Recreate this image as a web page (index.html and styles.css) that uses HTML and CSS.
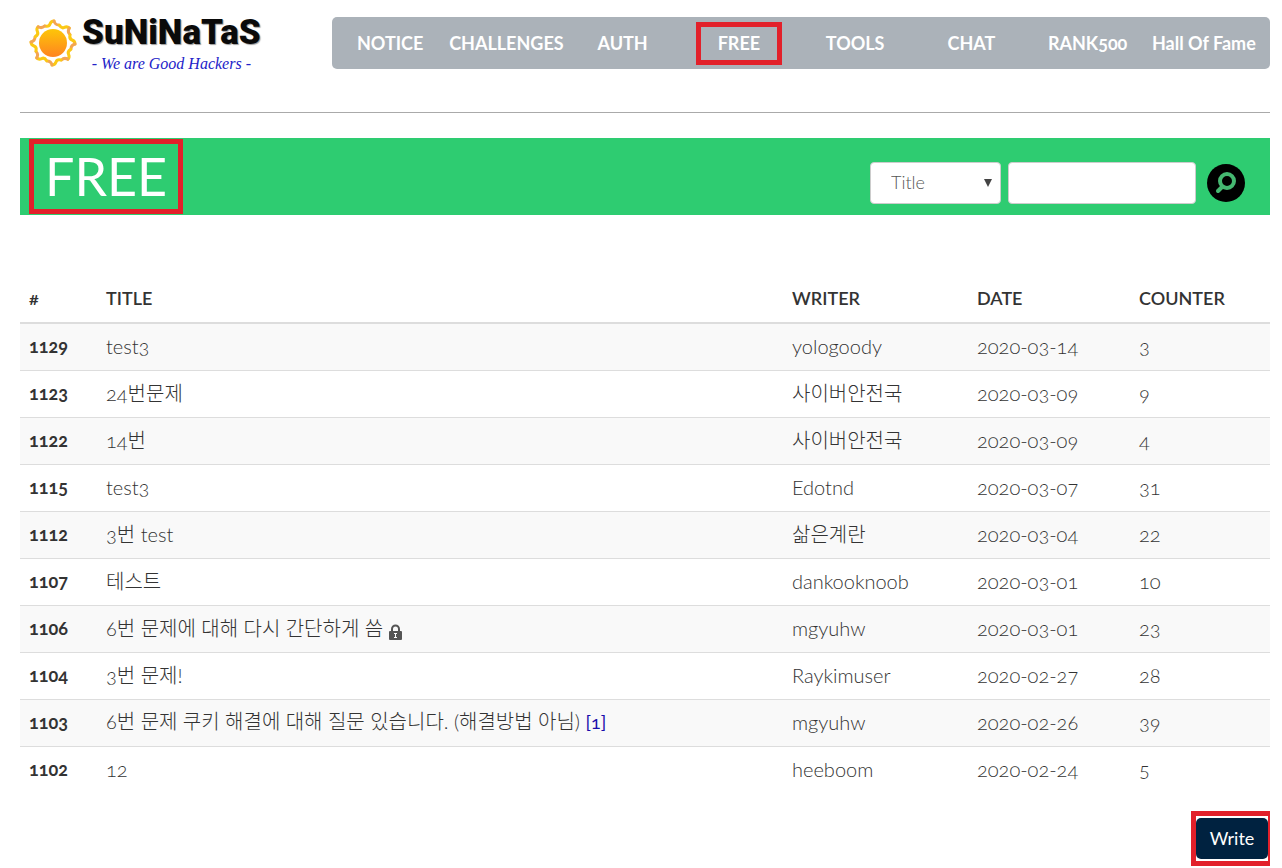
FILE: index.html
```
<!DOCTYPE html>
<html lang="en">
<head>
    <meta charset="UTF-8">
    <meta name="viewport" content="width=device-width, initial-scale=1.0">
    <title>SuNiNaTaS - FREE</title>
    <link rel="stylesheet" href="styles.css">
</head>
<body>
    <header>
        <a class="logo" href="#">
            <svg class="sun" viewBox="0 0 50 50" aria-hidden="true">
                <defs>
                    <linearGradient id="core" x1="0" y1="0" x2="0" y2="1">
                        <stop offset="0" stop-color="#fdc608"/>
                        <stop offset="1" stop-color="#ff8420"/>
                    </linearGradient>
                    <g id="ray" fill="none" stroke-width="3" stroke-linecap="round">
                        <path d="M17 8 Q21 9 22 6 Q23 3 26 3" stroke="#fbc914"/>
                        <path d="M26 3 Q27 7 31 7" stroke="#f3a552"/>
                    </g>
                </defs>
                <use href="#ray"/>
                <use href="#ray" transform="rotate(45 25 25)"/>
                <use href="#ray" transform="rotate(90 25 25)"/>
                <use href="#ray" transform="rotate(135 25 25)"/>
                <use href="#ray" transform="rotate(180 25 25)"/>
                <use href="#ray" transform="rotate(225 25 25)"/>
                <use href="#ray" transform="rotate(270 25 25)"/>
                <use href="#ray" transform="rotate(315 25 25)"/>
                <circle cx="25" cy="25" r="14" fill="url(#core)"/>
            </svg>
            <span class="logo-text">
                <strong>SuNiNaTaS</strong>
                <em>- We are Good Hackers -</em>
            </span>
        </a>
        <nav>
            <a href="#">NOTICE</a>
            <a href="#">CHALLENGES</a>
            <a href="#">AUTH</a>
            <a href="#"><span class="mark">FREE</span></a>
            <a href="#">TOOLS</a>
            <a href="#">CHAT</a>
            <a href="#">RANK500</a>
            <a href="#">Hall Of Fame</a>
        </nav>
    </header>

    <section class="banner">
        <h1 class="mark">FREE</h1>
        <form>
            <span class="select">
                <select aria-label="Search field">
                    <option>Title</option>
                    <option>Writer</option>
                </select>
            </span>
            <input type="text" aria-label="Search text">
            <button type="button" class="search" aria-label="Search">
                <svg viewBox="0 0 38 38">
                    <circle cx="19" cy="19" r="19" fill="#000"/>
                    <circle cx="20" cy="17" r="7" fill="none" stroke="#45b871" stroke-width="4"/>
                    <path d="M15 23 L11 27" stroke="#45b871" stroke-width="4" stroke-linecap="round"/>
                </svg>
            </button>
        </form>
    </section>

    <table>
        <thead>
            <tr>
                <th class="num">#</th>
                <th>TITLE</th>
                <th class="writer">WRITER</th>
                <th class="date">DATE</th>
                <th class="counter">COUNTER</th>
            </tr>
        </thead>
        <tbody>
            <tr><th>1129</th><td>test3</td><td>yologoody</td><td>2020-03-14</td><td>3</td></tr>
            <tr><th>1123</th><td>24번문제</td><td>사이버안전국</td><td>2020-03-09</td><td>9</td></tr>
            <tr><th>1122</th><td>14번</td><td>사이버안전국</td><td>2020-03-09</td><td>4</td></tr>
            <tr><th>1115</th><td>test3</td><td>Edotnd</td><td>2020-03-07</td><td>31</td></tr>
            <tr><th>1112</th><td>3번 test</td><td>삶은계란</td><td>2020-03-04</td><td>22</td></tr>
            <tr><th>1107</th><td>테스트</td><td>dankooknoob</td><td>2020-03-01</td><td>10</td></tr>
            <tr>
                <th>1106</th>
                <td>6번 문제에 대해 다시 간단하게 씀
                    <svg class="lock" viewBox="0 0 13 16" role="img" aria-label="Locked">
                        <path d="M3 7 V5 a3.500 3.500 0 0 1 7 0 V7" fill="none" stroke="#555" stroke-width="2"/>
                        <rect y="7" width="13" height="9" rx="1" fill="#555"/>
                        <path d="M6.500 9 V14 M5 9.500 H8 M5 13.500 H8" stroke="#fff" stroke-width="1"/>
                    </svg>
                </td>
                <td>mgyuhw</td><td>2020-03-01</td><td>23</td>
            </tr>
            <tr><th>1104</th><td>3번 문제!</td><td>Raykimuser</td><td>2020-02-27</td><td>28</td></tr>
            <tr><th>1103</th><td>6번 문제 쿠키 해결에 대해 질문 있습니다. (해결방법 아님) <a href="#">[1]</a></td><td>mgyuhw</td><td>2020-02-26</td><td>39</td></tr>
            <tr><th>1102</th><td>12</td><td>heeboom</td><td>2020-02-24</td><td>5</td></tr>
        </tbody>
    </table>

    <div class="actions">
        <div class="mark"><button type="button">Write</button></div>
    </div>
</body>
</html>
```
FILE: styles.css
```
* {
    box-sizing: border-box;
}
body {
    margin: 0 12px 0 20px;
    font-family: Lato, "Noto Sans CJK KR", sans-serif;
    font-size: 18px;
    font-weight: 300;
    font-variant-numeric: oldstyle-nums;
    color: #333;
}
a {
    color: #1a0dab;
    text-decoration: none;
}
.mark {
    border: 5px solid #e2202a;
}

/* header */
header {
    display: flex;
    align-items: flex-start;
    height: 113px;
    border-bottom: 1px solid #aaa;
}
.logo {
    display: flex;
    flex: 0 0 312px;
    padding: 13px 0 0 8px;
}
.sun {
    width: 50px;
    height: 50px;
    margin-top: 5px;
}
.logo-text {
    display: flex;
    flex-direction: column;
    align-items: center;
    margin-left: 4px;
}
.logo-text strong {
    font: 900 35px/40px Roboto, sans-serif;
    color: #0a0a0a;
    text-shadow: 1px 1px 1px #999;
}
.logo-text em {
    font: italic 16px/22px "Liberation Serif", serif;
    color: #2222c8;
}
nav {
    display: flex;
    flex: 1;
    height: 52px;
    margin-top: 17px;
    padding-right: 8px;
    background-color: #abb2b9;
    border-radius: 5px;
}
nav a {
    display: flex;
    flex: 1 1 0;
    align-items: center;
    justify-content: center;
    color: #fff;
    font-weight: 700;
    white-space: nowrap;
}
nav .mark {
    padding: 0 17px;
    line-height: 33px;
}

/* title bar */
.banner {
    display: flex;
    justify-content: space-between;
    margin-top: 25px;
    padding: 1px 25px 1px 9px;
    background-color: #2ecc71;
}
.banner h1 {
    margin: 0;
    padding: 0 11px;
    color: #fff;
    font-size: 52px;
    font-weight: 400;
    line-height: 65px;
}
.banner form {
    display: flex;
    align-items: center;
    margin-top: 12px;
}
.select {
    position: relative;
    margin-right: 7px;
}
.select::after {
    content: "";
    position: absolute;
    top: 17px;
    right: 9px;
    border: 4px solid transparent;
    border-top: 8px solid #444;
    border-bottom: 0;
    pointer-events: none;
}
.banner select,
.banner input {
    display: block;
    height: 42px;
    padding: 0 20px 2px;
    background-color: #fff;
    border: 1px solid #ccc;
    border-radius: 4px;
    color: #555;
    font: inherit;
}
.banner select {
    width: 131px;
    appearance: none;
}
.banner input {
    width: 188px;
}
.search {
    width: 38px;
    height: 38px;
    margin-left: 11px;
    padding: 0;
    background: none;
    border: 0;
}
.search svg {
    display: block;
}

/* board */
table {
    width: 100%;
    margin-top: 61px;
    border-collapse: collapse;
    table-layout: fixed;
}
th, td {
    height: 47px;
    padding: 0 9px 2px;
    border-top: 1px solid #ddd;
    line-height: 24px;
    text-align: left;
}
th {
    font-weight: 700;
}
td {
    font-size: 20px;
}
thead th {
    border-top: 0;
    border-bottom: 2px solid #ddd;
    font-weight: 600;
}
tbody tr:nth-child(odd) {
    background-color: #f9f9f9;
}
.num {
    width: 77px;
}
.writer {
    width: 185px;
}
.date {
    width: 162px;
}
.counter {
    width: 140px;
}
td a {
    font-size: 18px;
    font-weight: 400;
}
.lock {
    width: 13px;
    height: 16px;
    vertical-align: -4px;
}

.actions {
    display: flex;
    justify-content: flex-end;
    margin: 18px -3px 0 0;
}
.actions .mark {
    padding: 2px 0;
}
.actions button {
    display: block;
    width: 72px;
    height: 41px;
    padding: 0 0 2px;
    background-color: #002240;
    border: 0;
    border-radius: 5px;
    color: #fff;
    font: inherit;
    font-weight: 400;
}
```
